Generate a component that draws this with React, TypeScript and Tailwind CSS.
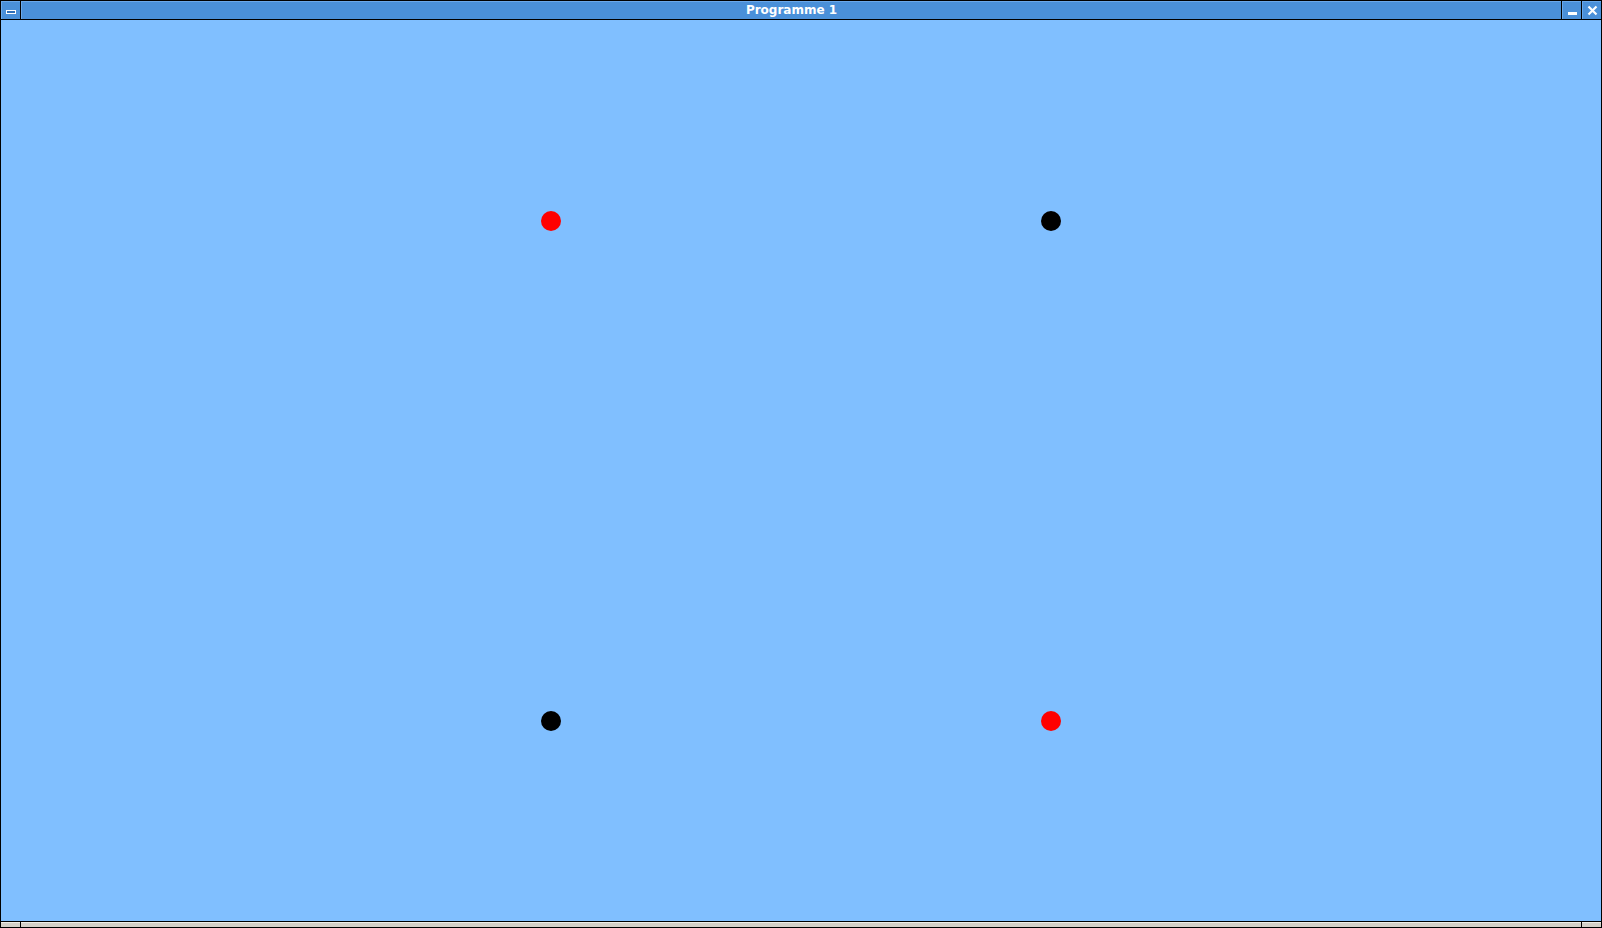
export default function App() {
  const dots = [
    ["bg-[#ff0000]", "bg-black"],
    ["bg-black", "bg-[#ff0000]"],
  ];
  return (
    <div className="flex h-[928px] w-[1602px] flex-col gap-px overflow-hidden bg-black p-px font-['DejaVu_Sans',sans-serif]">
      <div className="flex h-[18px] shrink-0 gap-px">
        <div className="flex w-[19px] items-center justify-center border-l border-t border-[#6aa8ea] bg-[#4a90d9]">
          <div className="mt-[2px] h-[4px] w-[10px] border border-white bg-[#2f6fb8]" />
        </div>
        <div className="flex flex-1 items-center justify-center border-l border-t border-[#6aa8ea] bg-[#4a90d9] pb-[2px] text-[12px] font-bold leading-none text-white">
          Programme 1
        </div>
        <div className="flex w-[19px] items-end justify-center border-l border-t border-[#6aa8ea] bg-[#4a90d9] pb-[4px]">
          <div className="h-[3px] w-[9px] bg-white" />
        </div>
        <div className="flex w-[19px] items-center justify-center border-l border-t border-[#6aa8ea] bg-[#4a90d9]">
          <svg width="11" height="11" viewBox="0 0 11 11">
            <path d="M1.5 1.5 L9.5 9.5 M9.5 1.5 L1.5 9.5" stroke="white" strokeWidth="2.2" />
          </svg>
        </div>
      </div>
      <div className="flex flex-1 flex-col bg-[#80bfff] pl-[540px] pt-[191px]">
        {dots.map((row, i) => (
          <div key={i} className={`flex gap-[480px] ${i === 1 ? "mt-[480px]" : ""}`}>
            {row.map((c, j) => (
              <div key={j} className={`h-[20px] w-[20px] rounded-full ${c}`} />
            ))}
          </div>
        ))}
      </div>
      <div className="flex h-[5px] shrink-0 gap-px">
        <div className="w-[19px] border-t border-[#f0eee8] bg-[#d4d0c8]" />
        <div className="flex-1 border-t border-[#f0eee8] bg-[#d4d0c8]" />
        <div className="w-[19px] border-t border-[#f0eee8] bg-[#d4d0c8]" />
      </div>
    </div>
  );
}
